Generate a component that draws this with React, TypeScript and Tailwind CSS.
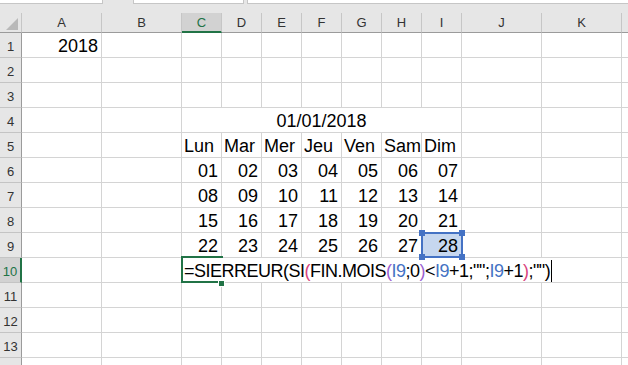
import type { ReactNode } from 'react';
import clsx from 'clsx';

const colWidths = [
    'w-[80px]', 'w-[80px]',
    'w-[40px]', 'w-[40px]', 'w-[40px]', 'w-[40px]', 'w-[40px]', 'w-[40px]', 'w-[40px]',
    'w-[80px]', 'w-[80px]', 'w-[80px]',
];
// la colonne L n'est visible que sur quelques pixels, sans sa lettre
const colNames = ['A', 'B', 'C', 'D', 'E', 'F', 'G', 'H', 'I', 'J', 'K', ''];
const days = ['Lun', 'Mar', 'Mer', 'Jeu', 'Ven', 'Sam', 'Dim'];
const weeks = [
    ['01', '02', '03', '04', '05', '06', '07'],
    ['08', '09', '10', '11', '12', '13', '14'],
    ['15', '16', '17', '18', '19', '20', '21'],
    ['22', '23', '24', '25', '26', '27', '28'],
];

function Cell({
    w,
    align = 'right',
    className,
    children,
}: {
    w: string;
    align?: 'left' | 'right' | 'center';
    className?: string;
    children?: ReactNode;
}) {
    return (
        <div
            className={clsx(
                'shrink-0 h-[25px] border-r border-b border-[#d4d4d4] flex items-end pb-[1px] leading-[20px] text-[18px] text-black whitespace-nowrap',
                w,
                align === 'left' && 'justify-start pl-[2px]',
                align === 'right' && 'justify-end pr-[3px]',
                align === 'center' && 'justify-center',
                className
            )}
        >
            {children}
        </div>
    );
}

function RowHeader({ n, active }: { n?: number; active?: boolean }) {
    return (
        <div
            className={clsx(
                'shrink-0 w-[22px] h-[25px] flex items-center justify-center pt-[3px] text-[13px] leading-none border-b border-b-[#c4c4c4]',
                active
                    ? 'bg-[#d2d2d2] text-[#217346] border-r-2 border-r-[#217346]'
                    : 'bg-[#e6e6e6] text-[#333] border-r border-r-[#9b9b9b]'
            )}
        >
            {n}
        </div>
    );
}

function EmptyCells({ from, to }: { from: number; to: number }) {
    return (
        <>
            {colWidths.slice(from, to).map((w, i) => (
                <Cell key={from + i} w={w} />
            ))}
        </>
    );
}

function Formula() {
    const ref = 'text-[#4472c4]';
    const p1 = 'text-[#d8437e]';
    const p2 = 'text-[#9b5fd1]';
    return (
        <span className="tracking-[-0.5px] flex items-end">
            <span>=SIERREUR(SI</span>
            <span className={p1}>(</span>
            <span>FIN.MOIS</span>
            <span className={p2}>(</span>
            <span className={ref}>I9</span>
            <span>;0</span>
            <span className={p2}>)</span>
            <span>&lt;</span>
            <span className={ref}>I9</span>
            <span>+1;"";</span>
            <span className={ref}>I9</span>
            <span>+1</span>
            <span className={p1}>)</span>
            <span>;"")</span>
            <span className="inline-block w-px h-[22px] bg-black ml-[1px] mb-[-1px]" />
        </span>
    );
}

export default function App() {
    return (
        <div className="w-[628px] h-[365px] overflow-hidden bg-white font-['Liberation_Sans',Arial,sans-serif] select-none">
            {/* bord du haut : zone de nom + barre de formule */}
            <div className="h-[13px] bg-[#e6e6e6] flex gap-[30px]">
                <div className="w-[103px] h-[4px] bg-white border-b border-r border-[#c6c6c6]" />
                <div className="flex gap-[3px] flex-1">
                    <div className="w-[111px] h-[4px] bg-white border-b border-x border-[#c6c6c6]" />
                    <div className="flex-1 h-[4px] bg-white border-b border-l border-[#c6c6c6]" />
                </div>
            </div>

            {/* en-têtes de colonnes */}
            <div className="flex h-[20px] bg-[#e6e6e6]">
                <div className="shrink-0 w-[22px] h-[20px] border-r border-r-[#c6c6c6] border-b border-b-[#9b9b9b] relative">
                    <svg className="absolute left-[6px] top-[5px]" width="13" height="13" viewBox="0 0 13 13">
                        <polygon points="12,0 12,12 0,12" fill="#b9b9b9" />
                    </svg>
                </div>
                {colNames.map((c, i) => (
                    <div
                        key={i}
                        className={clsx(
                            'shrink-0 h-[20px] flex items-center justify-center text-[13px] leading-none border-r border-r-[#c6c6c6]',
                            colWidths[i],
                            c === 'C'
                                ? 'bg-[#d2d2d2] text-[#217346] border-b-2 border-b-[#217346]'
                                : 'text-[#333] border-b border-b-[#9b9b9b]'
                        )}
                    >
                        {c}
                    </div>
                ))}
            </div>

            {/* ligne 1 */}
            <div className="flex">
                <RowHeader n={1} />
                <Cell w={colWidths[0]}>2018</Cell>
                <EmptyCells from={1} to={12} />
            </div>

            {[2, 3].map((n) => (
                <div key={n} className="flex">
                    <RowHeader n={n} />
                    <EmptyCells from={0} to={12} />
                </div>
            ))}

            {/* ligne 4 : cellules fusionnées C4:I4 */}
            <div className="flex">
                <RowHeader n={4} />
                <EmptyCells from={0} to={2} />
                <Cell w="w-[280px]" align="center">01/01/2018</Cell>
                <EmptyCells from={9} to={12} />
            </div>

            {/* ligne 5 : jours */}
            <div className="flex">
                <RowHeader n={5} />
                <EmptyCells from={0} to={2} />
                {days.map((d) => (
                    <Cell key={d} w="w-[40px]" align="left">{d}</Cell>
                ))}
                <EmptyCells from={9} to={12} />
            </div>

            {/* lignes 6 à 9 : dates */}
            {weeks.map((week, wi) => (
                <div key={wi} className="flex">
                    <RowHeader n={6 + wi} />
                    <EmptyCells from={0} to={2} />
                    {week.map((d, di) => {
                        const selected = wi === 3 && di === 6;
                        return (
                            <Cell
                                key={d}
                                w="w-[40px]"
                                className={selected ? 'relative bg-[#c6d7ef]' : undefined}
                            >
                                {d}
                                {selected && (
                                    <div className="absolute -left-[1px] -top-[1px] w-[42px] h-[26px] border-2 border-[#4472c4] z-10">
                                        <div className="absolute -left-[4px] -top-[4px] w-[6px] h-[6px] bg-[#4472c4]" />
                                        <div className="absolute -right-[4px] -top-[4px] w-[6px] h-[6px] bg-[#4472c4]" />
                                        <div className="absolute -left-[4px] -bottom-[4px] w-[6px] h-[6px] bg-[#4472c4]" />
                                        <div className="absolute -right-[4px] -bottom-[4px] w-[6px] h-[6px] bg-[#4472c4]" />
                                    </div>
                                )}
                            </Cell>
                        );
                    })}
                    <EmptyCells from={9} to={12} />
                </div>
            ))}

            {/* ligne 10 : saisie de la formule */}
            <div className="flex">
                <RowHeader n={10} active />
                <EmptyCells from={0} to={2} />
                <Cell w="w-[440px]" align="left" className="relative">
                    <Formula />
                    <div className="absolute -left-[1px] -top-[2px] w-[42px] h-[27px] border-l-2 border-t-2 border-b-2 border-[#217346] z-10">
                        <div className="absolute left-[35px] top-[22px] w-[7px] h-[7px] bg-[#217346] border border-white" />
                    </div>
                </Cell>
                <EmptyCells from={11} to={12} />
            </div>

            {[11, 12, 13].map((n) => (
                <div key={n} className="flex">
                    <RowHeader n={n} />
                    <EmptyCells from={0} to={12} />
                </div>
            ))}
            {/* ligne 14, coupée par le bas de la fenêtre */}
            <div className="flex">
                <RowHeader />
                <EmptyCells from={0} to={12} />
            </div>
        </div>
    );
}
